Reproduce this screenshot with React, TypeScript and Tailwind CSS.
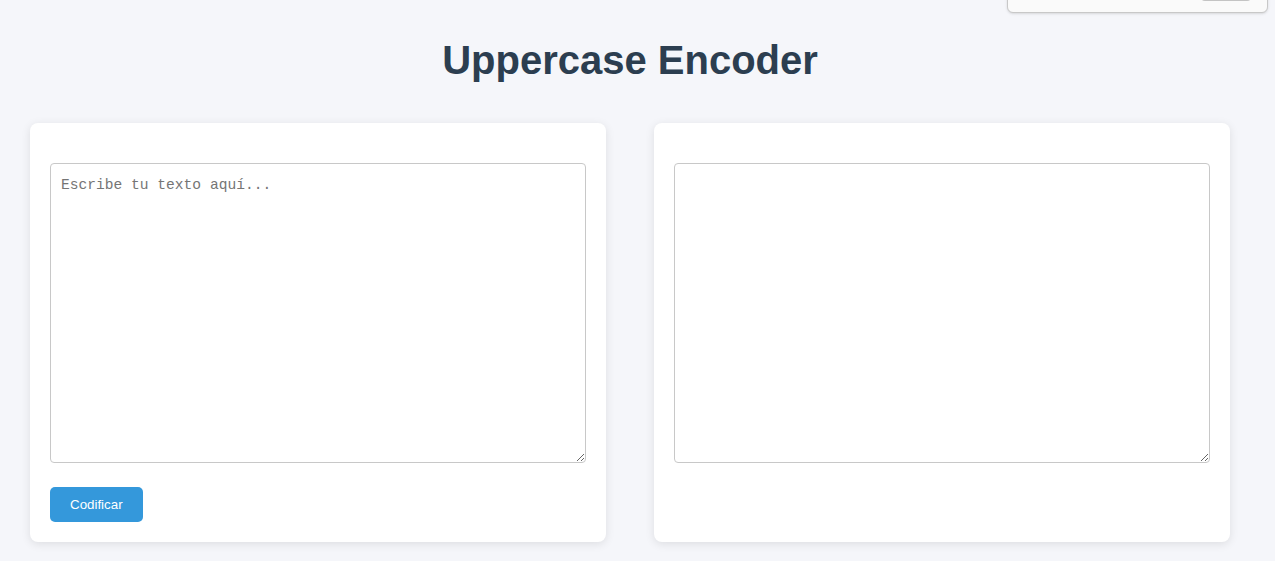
import React, { useState } from "react";

export default function App() {
  const [input, setInput] = useState("");
  const [output, setOutput] = useState("");

  return (
    <div
      className="min-h-screen w-full bg-[#f5f6fa] relative overflow-hidden"
      style={{ fontFamily: '"Liberation Sans", Arial, sans-serif' }}
    >
      {/* floating box at the top-right, mostly scrolled off */}
      <div className="absolute right-[7px] top-[-40px] w-[261px] h-[53px] bg-[#fafafa] border border-[#c8c8c8] rounded-b-md shadow-sm">
        <div className="absolute left-[193px] bottom-[11px] w-[50px] h-[6px] border-b-2 border-[#c4c4c4] rounded-b-sm" />
      </div>

      <div className="w-[1200px] ml-[30px]">
        <h1 className="pt-[37px] mb-[40px] text-center text-[40px] leading-[46px] font-bold text-[#2c3e50]">
          Uppercase Encoder
        </h1>

        <div className="grid grid-cols-2 gap-[48px]">
          <div className="bg-white rounded-lg shadow-[0_2px_10px_rgba(0,0,0,0.1)] pt-10 px-5 pb-5">
            <textarea
              value={input}
              onChange={(e) => setInput(e.target.value)}
              placeholder="Escribe tu texto aquí..."
              className="block w-full h-[300px] border border-[#c8c8c8] rounded px-[10px] pt-[11px] pb-[10px] text-[14.6px] leading-[20px] text-[#333] placeholder:text-[#757575] outline-none"
              style={{ fontFamily: '"Liberation Mono", "DejaVu Sans Mono", monospace' }}
            />
            <button
              onClick={() => setOutput(input.toUpperCase())}
              className="mt-6 h-[35px] px-5 bg-[#3498db] text-white text-[13.33px] rounded-[5px] cursor-pointer"
            >
              Codificar
            </button>
          </div>

          <div className="bg-white rounded-lg shadow-[0_2px_10px_rgba(0,0,0,0.1)] pt-10 px-5 pb-5">
            <textarea
              value={output}
              readOnly
              className="block w-full h-[300px] border border-[#c8c8c8] rounded px-[10px] pt-[11px] pb-[10px] text-[14.6px] leading-[20px] text-[#333] outline-none"
              style={{ fontFamily: '"Liberation Mono", "DejaVu Sans Mono", monospace' }}
            />
          </div>
        </div>
      </div>
    </div>
  );
}
